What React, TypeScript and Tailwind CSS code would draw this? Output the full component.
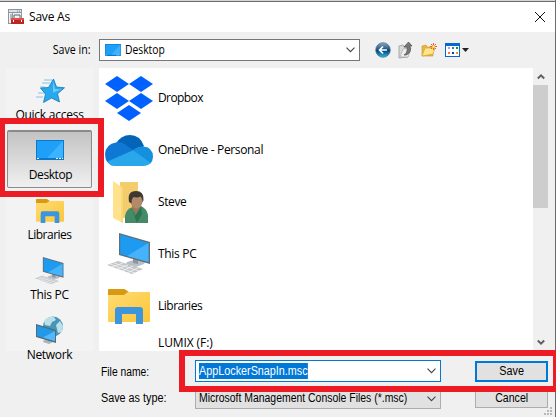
import React from 'react';

const ui = "font-['Open_Sans','Noto_Sans',sans-serif] text-[12px] leading-4 whitespace-nowrap";
const sans = "font-['Liberation_Sans',Arial,sans-serif] text-[12px] leading-4 whitespace-nowrap";

function Monitor({ className = '' }: { className?: string }) {
  return (
    <svg viewBox="0 0 28 20" className={className} preserveAspectRatio="none">
      <rect width="28" height="20" fill="#0a79c9" />
      <rect x="1" y="1" width="26" height="17" fill="#1ea0f8" />
      <path d="M27 1v17H11z" fill="#3eb2fc" />
      <path d="M1 18.5h2M20 18.5h7" stroke="#fff" strokeWidth="1" strokeDasharray="2 1" />
    </svg>
  );
}

function Pc({ className = '' }: { className?: string }) {
  return (
    <svg viewBox="0 0 44 42" className={className}>
      <path d="M20 29l10-3 8 3-1 2-8 3-10-3z" fill="#b9c0c5" />
      <path d="M26 24l5 2v5l-5-1z" fill="#8e979e" />
      <path d="M12 0l31 9v22l-31-9z" fill="#626d75" />
      <path d="M13.200 1.500L41.500 10v19L13.200 21z" fill="#1c9bf0" />
      <path d="M41.500 10v19L20 23z" fill="#46b2fb" />
      <path d="M11 28l25 8-11 5L0 32z" fill="#c2c6c9" />
      <path d="M7 30l25 8M3 31l25 9M16 30L5 34M21 32l-11 4M26 33l-11 5M31 35l-11 5" stroke="#f1f2f3" strokeWidth=".8" />
    </svg>
  );
}

function LibraryFolder({ className = '' }: { className?: string }) {
  return (
    <svg viewBox="0 0 42 35" className={className} preserveAspectRatio="none">
      <defs>
        <linearGradient id="lib" x2="1" y2="1"><stop stopColor="#ffdb73" /><stop offset="1" stopColor="#fbc73a" /></linearGradient>
      </defs>
      <path d="M0 1q0-1 1-1h15q1 0 2 1l3 2-3 4H0z" fill="#d99a13" />
      <path d="M0 6h16l4-3h21q1 0 1 1v28q0 1-1 1H1q-1 0-1-1z" fill="url(#lib)" />
      <path d="M7 35V21q0-3 3-3h22q3 0 3 3v14h-7V25H14v10z" fill="#3b96dd" />
    </svg>
  );
}

function Dropbox() {
  return (
    <svg viewBox="0 0 48 45" className="h-[45px] w-12" fill="#0061fe">
      <path d="M12 0l12 8-12 8L0 8zM36 0l12 8-12 8-12-8zM12 17l12 8-12 8-12-8zM36 17l12 8-12 8-12-8zM24 29l12 8-12 8-12-8z" />
    </svg>
  );
}

function OneDrive() {
  return (
    <svg viewBox="0 0 48 31" className="h-[31px] w-12">
      <path d="M11 8.500Q16 0 25 0q10 0 14 11l-8 8z" fill="#0364b8" />
      <path d="M9 31Q0 29 0 19 1 9 11 7.500q6-1 12 4l9 6-25 13z" fill="#0f78d4" />
      <path d="M27.500 15.500q5-4.500 10.500-4Q48 12 48 22q0 4-3 7z" fill="#1490df" />
      <path d="M2.500 26.500L28 15.200l17.500 12.600Q43 31 38 31H10q-5 0-7.500-4.500z" fill="#28a8ea" />
    </svg>
  );
}

function UserFolder() {
  return (
    <svg viewBox="0 0 36 43" className="ml-[3px] h-[43px] w-9">
      <path d="M7 1h18v36H7z" fill="#f3cd6c" />
      <path d="M0 0l10 7v35L0 37z" fill="#ffe28b" />
      <path d="M8 5.500l2 1.500v35l-2-1z" fill="#f9d878" />
      <path d="M12 42V35q1-7 8-9l8-1q6 3 7 9v8z" fill="#468b68" />
      <path d="M18 26l4 9 6-10 1 8-5 9z" fill="#2d7350" />
      <path d="M19 24l8-1v4l-4 6-4-6z" fill="#9c7656" />
      <ellipse cx="23.500" cy="19.500" rx="6" ry="8" fill="#b18b69" />
      <path d="M16 21q-2-11 7-11 8 0 7.500 9l-1 3q0-5-2-6.500-3 1.500-7 .5-2 1.500-2 6.500z" fill="#3e3732" />
    </svg>
  );
}

function Star() {
  return (
    <svg viewBox="0 0 30 25" className="h-[25px] w-[30px]">
      <path d="M9 2h8M7 5h8M5 9h5M3 15h7M1 19h7" stroke="#83c5ec" />
      <path d="M18.500 1l3 8 8 .8-7 6 2 8.200-8-4-8 4.500 2-8.500-5-6 8-.5z" fill="#28a9ef" stroke="#1778b4" strokeWidth=".8" />
      <path d="M18 3l2 8 7 .5-9 3z" fill="#66ccfb" />
    </svg>
  );
}

function Network() {
  return (
    <svg viewBox="0 0 28 29" className="h-[29px] w-7">
      <circle cx="17" cy="10.500" r="10" fill="#4796b7" />
      <path d="M8 5q4-5 10-4l2 3-4 2-2 4-5-1zM20 9l4-4 3 5-1 6-4 1z" fill="#bce0ea" />
      <path d="M8 24l6-2 5 3-6 3-6-2z" fill="#abb4bb" />
      <path d="M12 21h3v4h-3z" fill="#77838c" />
      <path d="M0 8l20 6v13L0 21z" fill="#5b6871" />
      <path d="M1 9.500l18 5.400v10.500L1 20z" fill="#2198e8" />
      <path d="M19 15v10L7 21.500z" fill="#54b9f8" />
    </svg>
  );
}

function Chevron({ className = '' }: { className?: string }) {
  return (
    <svg viewBox="0 0 9 6" className={`h-[6px] w-[9px] shrink-0 ${className}`} fill="none" stroke="#444" strokeWidth="1.100"><path d="M.5 .7l4 4 4-4" /></svg>
  );
}

function ScrollArrow({ className = '' }: { className?: string }) {
  return (
    <svg viewBox="0 0 8 7" className={`h-[7px] w-2 ${className}`} fill="none" stroke="#606060" strokeWidth="2"><path d="M.8 1.500L4 4.700l3.200-3.200" /></svg>
  );
}

function AppIcon() {
  return (
    <svg viewBox="0 0 16 16" className="h-4 w-4">
      <path d="M0 0h14v15H0z" fill="#8b98a4" />
      <path d="M1 1h12v2H1z" fill="#dce2e8" />
      <path d="M1 4h3v10H1zM5 4h8v6H5z" fill="#eff1f2" />
      <path d="M2 6h2M2 8h2M2 10h2M9 2h1M11 2h1" stroke="#788896" />
      <path d="M6 9V6h6v3" fill="none" stroke="#61666b" />
      <path d="M3 9h13v6H3z" fill="#bd2524" />
      <path d="M3 9h13v2H3z" fill="#df5046" />
      <path d="M5 11h1v2H5zM13 11h1v2h-1z" fill="#fff" />
    </svg>
  );
}

function ToolIcons() {
  return (
    <div className="flex items-center">
      <svg viewBox="0 0 16 16" className="h-4 w-4">
        <defs><linearGradient id="bk" x2="0" y2="1"><stop stopColor="#91a9bd" /><stop offset=".4" stopColor="#29608d" /><stop offset=".55" stopColor="#064477" /><stop offset="1" stopColor="#25bdec" /></linearGradient></defs>
        <circle cx="8" cy="8" r="7.300" fill="url(#bk)" stroke="#486c88" strokeWidth=".7" />
        <path d="M12 8H5M8 4.500L4.500 8 8 11.500" stroke="#fff" strokeWidth="1.700" fill="none" />
      </svg>
      <svg viewBox="0 0 16 18" className="ml-[7px] h-[18px] w-4">
        <path d="M1 5l4-1 1 2 4-1v11l-9 1z" fill="#d9d9d9" stroke="#999" strokeWidth=".8" />
        <path d="M2 16l3-8 8-1-3 9z" fill="#eee" stroke="#aaa" strokeWidth=".7" />
        <path d="M6 14q4-2 3-8H6l4.500-5L14 5h-2q2 7-4 9z" fill="#777" stroke="#4e4e4e" strokeWidth=".7" />
      </svg>
      <svg viewBox="0 0 16 16" className="ml-[7px] h-4 w-4">
        <path d="M1 14V4l4-1 1 2h6v9z" fill="#e8b740" stroke="#d19e2b" strokeWidth=".7" />
        <path d="M1 14l3-8h10l-2 6z" fill="#ffe78d" stroke="#d4a534" strokeWidth=".7" />
        <path d="M12.500 1v7M9 4.500h7M10 2l5 5M15 2l-5 5" stroke="#f05a28" />
        <circle cx="12.500" cy="4.500" r="1.500" fill="#ffe27a" />
      </svg>
      <svg viewBox="0 0 15 14" className="ml-2 h-[14px] w-[15px]" shapeRendering="crispEdges">
        <path d="M0 0h15v14H0z" fill="#0868cf" /><path d="M1 3h13v10H1z" fill="#fff" />
        <path d="M3 4h2v2H3z" fill="#aaa3cc" /><path d="M7 4h2v2H7z" fill="#1680df" /><path d="M11 4h2v2h-2z" fill="#159536" />
        <path d="M3 9h2v2H3z" fill="#f17349" /><path d="M7 9h2v2H7z" fill="#163aa1" /><path d="M11 9h2v2h-2z" fill="#d7a216" />
      </svg>
      <svg viewBox="0 0 7 4" className="ml-[2px] h-1 w-[7px]"><path d="M0 0h7L3.500 4z" fill="#222" /></svg>
    </div>
  );
}

function FileRow({ icon, children, tracking = '' }: { icon: React.ReactNode; children: React.ReactNode; tracking?: string }) {
  return (
    <div className="flex h-[52px] items-center">
      <div className="flex w-12 shrink-0 justify-center">{icon}</div>
      <span className={`${ui} ml-[5px] ${tracking}`}>{children}</span>
    </div>
  );
}

function Place({ icon, label, tracking = '' }: { icon: React.ReactNode; label: string; tracking?: string }) {
  return (
    <div className="flex h-[60px] flex-col items-center">
      <div className="flex h-[37px] items-center pt-1">{icon}</div>
      <span className={`${ui} ${tracking}`}>{label}</span>
    </div>
  );
}

export default function App() {
  return (
    <div className="relative h-[417px] w-[556px] overflow-hidden text-black">
      <div className="flex h-[417px] flex-col overflow-hidden border-r border-[#6b6b6b] bg-[#f0f0f0]">
        <div className="h-px shrink-0 bg-[#d5d5d5]" />
        <div className="h-px shrink-0 bg-[#6b6b6b]" />
        <header className="flex h-[30px] shrink-0 items-center bg-white pl-2 pr-[10px]">
          <AppIcon />
          <span className={`${ui} ml-[5px] tracking-[-0.2px]`}>Save As</span>
          <svg viewBox="0 0 10 10" className="ml-auto h-[10px] w-[10px]" stroke="#111" strokeWidth="1"><path d="M0 0l10 10M10 0L0 10" /></svg>
        </header>
        <div className="flex h-9 shrink-0 items-center">
          <div className="flex w-[91px] justify-end"><span className={`${ui} origin-right scale-x-[.89]`}>Save in:</span></div>
          <div className="ml-2 flex h-[22px] w-[261px] items-center border border-[#777] bg-white pl-[5px] pr-1">
            <Monitor className="h-3 w-4" />
            <span className={`${ui} ml-1 origin-left scale-x-[.86]`}>Desktop</span>
            <Chevron className="ml-auto" />
          </div>
          <div className="ml-[15px]"><ToolIcons /></div>
        </div>
        <div className="flex h-[283px] shrink-0">
          <aside className="ml-[6px] w-[87px] bg-[#f3f3f3] pt-[2px]">
            <Place icon={<Star />} label="Quick access" tracking="tracking-[-0.25px]" />
            <div className="h-[60px] px-px">
              <div className="flex h-[58px] flex-col items-center rounded-[2px] border border-t-2 border-[#8a8a8a] bg-linear-to-b from-[#c3c3c3] to-[#f0f0f0] pt-2">
                <Monitor className="h-5 w-7" />
                <span className={`${ui} ml-[2px] mt-[7px] tracking-[-0.4px]`}>Desktop</span>
              </div>
            </div>
            <Place icon={<LibraryFolder className="h-6 w-7" />} label="Libraries" tracking="tracking-[-0.5px]" />
            <Place icon={<Pc className="h-[28px] w-[31px]" />} label="This PC" tracking="tracking-[-0.3px]" />
            <Place icon={<Network />} label="Network" tracking="tracking-[-0.3px]" />
          </aside>
          <main className="ml-[6px] flex h-[283px] w-[434px] flex-col overflow-hidden bg-white pl-[6px] pt-1">
            <FileRow icon={<Dropbox />} tracking="tracking-[-0.6px]">Dropbox</FileRow>
            <FileRow icon={<OneDrive />} tracking="tracking-[-0.35px]">OneDrive - Personal</FileRow>
            <FileRow icon={<UserFolder />} tracking="tracking-[-0.4px]">Steve</FileRow>
            <FileRow icon={<Pc className="h-[42px] w-11" />} tracking="tracking-[-0.3px]">This PC</FileRow>
            <FileRow icon={<LibraryFolder className="h-[35px] w-[42px]" />} tracking="tracking-[-0.5px]">Libraries</FileRow>
            <span className={`${ui} ml-[53px] mt-[3px] tracking-[-0.1px]`}>LUMIX (F:)</span>
          </main>
          <div className="flex w-[15px] flex-col items-center">
            <div className="flex h-[17px] items-center"><ScrollArrow className="rotate-180" /></div>
            <div className="h-[123px] w-full bg-[#cdcdcd]" />
            <div className="mt-auto flex h-[17px] items-center"><ScrollArrow /></div>
          </div>
        </div>
        <footer className="flex flex-col pt-[9px]">
          <div className="flex h-[22px] items-center">
            <div className="ml-[101px] flex w-[94px] pt-px"><span className={`${sans} origin-left scale-x-[.86]`}>File name:</span></div>
            <div className="flex h-[22px] w-[246px] items-center border border-[#0078d7] bg-white pl-[3px] pr-1">
              <span className={`${sans} origin-left scale-x-[.9] bg-[#0078d7] text-white`}>AppLockerSnapIn.msc</span>
              <Chevron className="ml-auto" />
            </div>
            <div className="ml-[34px] flex h-[21px] w-[73px] items-center justify-center border-2 border-[#0078d7] bg-[#e1e1e1]">
              <span className={`${sans} scale-x-[.9]`}>Save</span>
            </div>
          </div>
          <div className="mt-[5px] flex h-[22px] items-center">
            <div className="ml-[101px] flex w-[94px]"><span className={`${sans} origin-left scale-x-[.9]`}>Save as type:</span></div>
            <div className="flex h-[22px] w-[246px] items-center border border-[#adadad] bg-[#e1e1e1] pl-[3px] pr-1">
              <div className="flex w-[212px]"><span className={`${sans} origin-left scale-x-[.87]`}>Microsoft Management Console Files (*.msc)</span></div>
              <Chevron className="ml-auto mt-[2px]" />
            </div>
            <div className="mb-px ml-[34px] flex h-[21px] w-[73px] items-center justify-center border border-[#adadad] bg-[#e1e1e1]">
              <span className={`${sans} scale-x-[.88]`}>Cancel</span>
            </div>
          </div>
        </footer>
      </div>
      <div className="absolute left-0 top-[118px] h-[79px] w-[104px] border-[6px] border-l-[5px] border-[#ed1c24]" />
      <div className="absolute left-[179px] top-[350px] h-[42px] w-[377px] border-[6px] border-r-[3px] border-[#ed1c24]" />
      <svg className="absolute left-[544px] top-[407px] h-2 w-2" viewBox="0 0 8 8" fill="#b8b8b8"><path d="M6 0h2v2H6zM3 3h2v2H3zM6 3h2v2H6zM0 6h2v2H0zM3 6h2v2H3zM6 6h2v2H6z" /></svg>
    </div>
  );
}
